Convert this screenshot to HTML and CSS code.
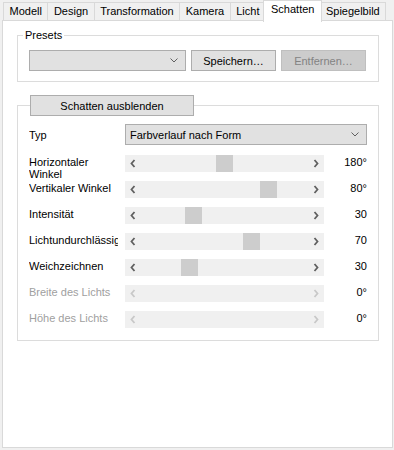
FILE: index.html
```html
<!DOCTYPE html>
<html lang="de">
<head>
    <meta charset="UTF-8">
    <meta name="viewport" content="width=device-width, initial-scale=1.0">
    <title>Schatten</title>
    <link rel="stylesheet" href="styles.css">
</head>
<body>
    <div class="tabs">
        <div class="tab">Modell</div>
        <div class="tab">Design</div>
        <div class="tab">Transformation</div>
        <div class="tab">Kamera</div>
        <div class="tab">Licht</div>
        <div class="tab active">Schatten</div>
        <div class="tab">Spiegelbild</div>
    </div>

    <div class="panel">
        <fieldset class="group presets">
            <legend>Presets</legend>
            <div class="preset-row">
                <div class="combo preset-combo">
                    <span></span>
                    <svg class="drop" width="8" height="5" viewBox="0 0 8 5"><polyline points="0.5,0.5 4,4 7.5,0.5" /></svg>
                </div>
                <button class="btn">Speichern…</button>
                <button class="btn" disabled>Entfernen…</button>
            </div>
        </fieldset>

        <fieldset class="group shadow">
            <legend><button class="btn toggle">Schatten ausblenden</button></legend>
            <div class="form">
                <span class="label type-label">Typ</span>
                <div class="combo type-combo">
                    <span>Farbverlauf nach Form</span>
                    <svg class="drop" width="8" height="5" viewBox="0 0 8 5"><polyline points="0.5,0.5 4,4 7.5,0.5" /></svg>
                </div>

                <span class="label wrap">Horizontaler<br>Winkel</span>
                <div class="slider">
                    <svg class="arrow" width="17" height="17" viewBox="0 0 17 17"><polyline points="9.5,5 6.5,8.5 9.5,12" /></svg>
                    <div class="track"><div class="thumb" style="margin-left: 74px"></div></div>
                    <svg class="arrow" width="17" height="17" viewBox="0 0 17 17"><polyline points="7.5,5 10.5,8.5 7.5,12" /></svg>
                </div>
                <span class="value">180°</span>

                <span class="label">Vertikaler Winkel</span>
                <div class="slider">
                    <svg class="arrow" width="17" height="17" viewBox="0 0 17 17"><polyline points="9.5,5 6.5,8.5 9.5,12" /></svg>
                    <div class="track"><div class="thumb" style="margin-left: 118px"></div></div>
                    <svg class="arrow" width="17" height="17" viewBox="0 0 17 17"><polyline points="7.5,5 10.5,8.5 7.5,12" /></svg>
                </div>
                <span class="value">80°</span>

                <span class="label">Intensität</span>
                <div class="slider">
                    <svg class="arrow" width="17" height="17" viewBox="0 0 17 17"><polyline points="9.5,5 6.5,8.5 9.5,12" /></svg>
                    <div class="track"><div class="thumb" style="margin-left: 43px"></div></div>
                    <svg class="arrow" width="17" height="17" viewBox="0 0 17 17"><polyline points="7.5,5 10.5,8.5 7.5,12" /></svg>
                </div>
                <span class="value">30</span>

                <span class="label">Lichtundurchlässigkeit</span>
                <div class="slider">
                    <svg class="arrow" width="17" height="17" viewBox="0 0 17 17"><polyline points="9.5,5 6.5,8.5 9.5,12" /></svg>
                    <div class="track"><div class="thumb" style="margin-left: 101px"></div></div>
                    <svg class="arrow" width="17" height="17" viewBox="0 0 17 17"><polyline points="7.5,5 10.5,8.5 7.5,12" /></svg>
                </div>
                <span class="value">70</span>

                <span class="label">Weichzeichnen</span>
                <div class="slider">
                    <svg class="arrow" width="17" height="17" viewBox="0 0 17 17"><polyline points="9.5,5 6.5,8.5 9.5,12" /></svg>
                    <div class="track"><div class="thumb" style="margin-left: 39px"></div></div>
                    <svg class="arrow" width="17" height="17" viewBox="0 0 17 17"><polyline points="7.5,5 10.5,8.5 7.5,12" /></svg>
                </div>
                <span class="value">30</span>

                <span class="label disabled">Breite des Lichts</span>
                <div class="slider disabled">
                    <svg class="arrow" width="17" height="17" viewBox="0 0 17 17"><polyline points="9.5,5 6.5,8.5 9.5,12" /></svg>
                    <div class="track"></div>
                    <svg class="arrow" width="17" height="17" viewBox="0 0 17 17"><polyline points="7.5,5 10.5,8.5 7.5,12" /></svg>
                </div>
                <span class="value">0°</span>

                <span class="label disabled">Höhe des Lichts</span>
                <div class="slider disabled">
                    <svg class="arrow" width="17" height="17" viewBox="0 0 17 17"><polyline points="9.5,5 6.5,8.5 9.5,12" /></svg>
                    <div class="track"></div>
                    <svg class="arrow" width="17" height="17" viewBox="0 0 17 17"><polyline points="7.5,5 10.5,8.5 7.5,12" /></svg>
                </div>
                <span class="value">0°</span>
            </div>
        </fieldset>
    </div>
</body>
</html>
```

FILE: styles.css
```css
body {
    margin: 0;
    background: #f0f0f0;
    font-family: "Liberation Sans", Arial, sans-serif;
    font-size: 11px;
    color: #000;
}

/* tab strip */
.tabs {
    display: flex;
    height: 18px;
    padding: 2px 0 0 3px;
}
.tab {
    border: 1px solid #d9d9d9;
    border-bottom: none;
    padding: 0 5.5px;
    margin-left: -1px;
    line-height: 17px;
    background: #f0f0f0;
    white-space: nowrap;
}
.tab:first-child {
    margin-left: 0;
}
.tab.active {
    position: relative;
    z-index: 1;
    height: 21px;
    margin: -2px -2px 0 -3px;
    padding: 0 7px;
    background: #fff;
}

.panel {
    margin: 0 1px 0 2px;
    height: 426px;
    border: 1px solid #d9d9d9;
    background: #fff;
}

/* group boxes */
.group {
    border: 1px solid #dcdcdc;
    margin: 0 13px 0 14px;
    padding: 0 11px;
    min-width: 0;
}
.presets {
    margin-top: 7px;
    padding-top: 8px;
    padding-bottom: 10px;
}
.presets legend {
    margin-left: -6px;
    padding: 0 2px;
    line-height: 14px;
}
.shadow {
    margin-top: 13px;
    padding-top: 8px;
    padding-bottom: 12px;
}
.shadow legend {
    margin-left: 1px;
    padding: 0;
}

.preset-row {
    display: flex;
    gap: 5px;
}

.btn {
    box-sizing: border-box;
    height: 21px;
    width: 85px;
    padding: 0;
    border: 1px solid #adadad;
    background: #e1e1e1;
    font: inherit;
    color: #000;
}
.btn:disabled {
    background: #cccccc;
    border-color: #bfbfbf;
    color: #838383;
}
.toggle {
    width: 164px;
    display: block;
}

.combo {
    box-sizing: border-box;
    height: 21px;
    display: flex;
    align-items: center;
    justify-content: space-between;
    padding: 0 7px 0 4px;
    border: 1px solid #adadad;
    background: #e1e1e1;
}
.preset-combo {
    width: 157px;
}
.drop polyline {
    fill: none;
    stroke: #606060;
    stroke-width: 1;
}

/* rows of the shadow group */
.form {
    display: grid;
    grid-template-columns: 89px 199px 36px;
    column-gap: 7px;
    row-gap: 9px;
    align-items: start;
}
.label {
    overflow: hidden;
    white-space: nowrap;
    line-height: 12px;
    padding-top: 1px;
}
.label.wrap {
    margin-bottom: -8px;
}
.label.disabled {
    color: #a0a0a0;
}
.type-label {
    align-self: center;
    padding-top: 0;
}
.type-combo {
    grid-column: 2 / 4;
    margin-bottom: 1px;
}
.value {
    text-align: right;
    line-height: 12px;
    padding-top: 1px;
}

.slider {
    display: flex;
    height: 17px;
    background: #f0f0f0;
}
.arrow {
    flex: none;
}
.arrow polyline {
    fill: none;
    stroke: #606060;
    stroke-width: 1.8;
}
.slider.disabled .arrow polyline {
    stroke: #c8c8c8;
}
.track {
    flex: 1;
}
.thumb {
    width: 17px;
    height: 17px;
    background: #cdcdcd;
}
```
